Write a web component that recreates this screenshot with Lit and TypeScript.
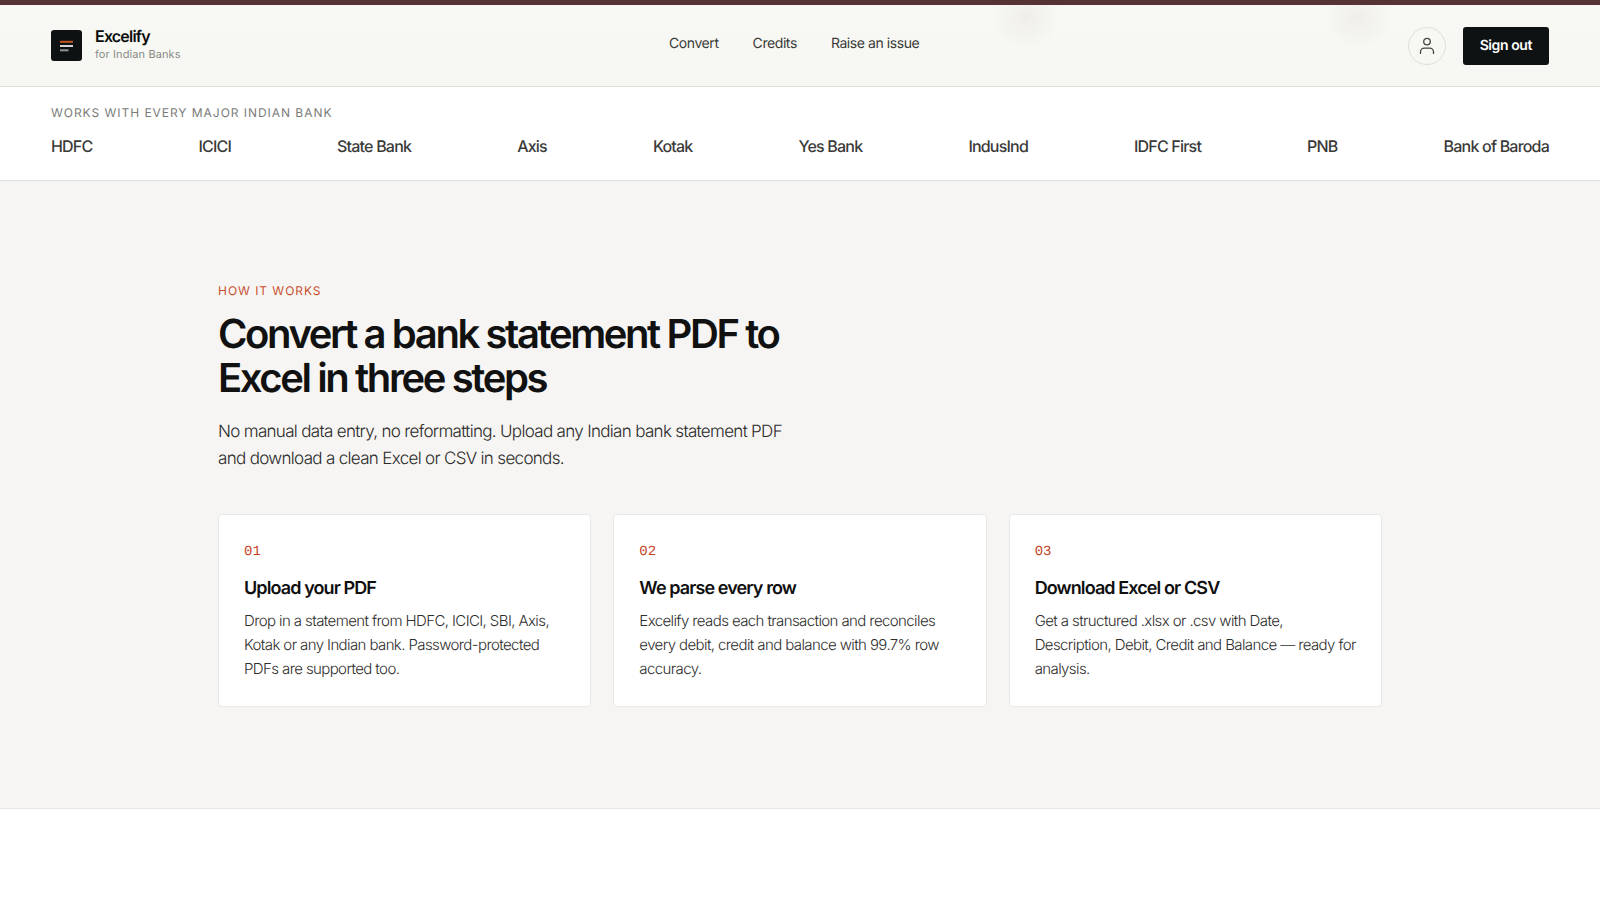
import { LitElement, html, css } from "lit";
import { customElement, property } from "lit/decorators.js";

const BANKS = ["HDFC", "ICICI", "State Bank", "Axis", "Kotak", "Yes Bank", "IndusInd", "IDFC First", "PNB", "Bank of Baroda"];

const STEPS = [
  {
    number: "01",
    heading: "Upload your PDF",
    text: "Drop in a statement from HDFC, ICICI, SBI, Axis, Kotak or any Indian bank. Password-protected PDFs are supported too.",
  },
  {
    number: "02",
    heading: "We parse every row",
    text: "Excelify reads each transaction and reconciles every debit, credit and balance with 99.7% row accuracy.",
  },
  {
    number: "03",
    heading: "Download Excel or CSV",
    text: "Get a structured .xlsx or .csv with Date, Description, Debit, Credit and Balance — ready for analysis.",
  },
];

@customElement("site-header")
export class SiteHeader extends LitElement {
  static styles = css`
    :host {
      display: block;
      border-top: 5px solid #553335;
      border-bottom: 1px solid #deded9;
      background:
        radial-gradient(ellipse 34px 32px at 1026px 12px, rgba(110, 60, 50, 0.06), transparent),
        radial-gradient(ellipse 34px 32px at 1358px 12px, rgba(110, 60, 50, 0.06), transparent),
        linear-gradient(#f8f9f4, #f6f7f2);
    }
    .bar {
      display: flex;
      justify-content: space-between;
      align-items: center;
      box-sizing: border-box;
      min-height: 81px;
      padding: 0 51px;
    }
    .brand {
      display: flex;
      align-items: center;
      gap: 13px;
      color: inherit;
      text-decoration: none;
    }
    .mark {
      display: block;
      width: 31px;
      height: 31px;
    }
    .names {
      display: flex;
      flex-direction: column;
      padding-bottom: 2px;
    }
    .name {
      font-size: 16px;
      line-height: 19px;
      font-weight: 600;
      letter-spacing: -0.05em;
      color: #0b0c0c;
    }
    .tag {
      font-size: 11px;
      line-height: 17px;
      letter-spacing: 0.01em;
      color: #8a8a87;
    }
    .links {
      display: flex;
      gap: 34px;
      padding-bottom: 4px;
    }
    .link {
      font-size: 14px;
      line-height: 20px;
      letter-spacing: -0.03em;
      color: #3a3a38;
      text-decoration: none;
    }
    .account {
      display: flex;
      align-items: center;
      gap: 17px;
    }
    .avatar {
      display: grid;
      place-items: center;
      width: 38px;
      height: 38px;
      padding: 0;
      border: 1px solid #dfe0db;
      border-radius: 50%;
      background: transparent;
      color: #444442;
    }
    .signout {
      height: 38px;
      padding: 0 17px;
      border: 0;
      border-radius: 3px;
      background: #0e1213;
      color: #ffffff;
      font: 600 14px/20px Inter, sans-serif;
      text-rendering: inherit;
      letter-spacing: -0.03em;
    }
  `;

  render() {
    return html`
      <header class="bar">
        <a class="brand" href="#home">
          <svg class="mark" viewBox="0 0 31 31" aria-hidden="true">
            <rect width="31" height="31" rx="3" fill="#0d1112" />
            <rect x="9" y="10.8" width="13" height="2" fill="#c4541f" />
            <rect x="9" y="15" width="13" height="2" fill="#d3d3d8" />
            <rect x="9" y="19.3" width="8.5" height="2" fill="#8f9492" />
          </svg>
          <span class="names">
            <span class="name">Excelify</span>
            <span class="tag">for Indian Banks</span>
          </span>
        </a>
        <nav class="links" aria-label="Main">
          <a class="link" href="#convert">Convert</a>
          <a class="link" href="#credits">Credits</a>
          <a class="link" href="#issue">Raise an issue</a>
        </nav>
        <div class="account">
          <button class="avatar" type="button" aria-label="Account">
            <svg width="18" height="18" viewBox="0 0 18 18" fill="none" stroke="currentColor" stroke-width="1.3" stroke-linecap="round" aria-hidden="true">
              <circle cx="9" cy="4.6" r="3.3" />
              <path d="M2.5 16.4V15a3.8 3.8 0 0 1 3.8-3.8h5.400a3.8 3.8 0 0 1 3.8 3.8v1.4" />
            </svg>
          </button>
          <button class="signout" type="button">Sign out</button>
        </div>
      </header>
    `;
  }
}

@customElement("bank-strip")
export class BankStrip extends LitElement {
  static styles = css`
    :host {
      display: block;
      padding: 17px 51px 21px;
      border-bottom: 1px solid #dfdfde;
      background: #ffffff;
    }
    .label {
      margin: 0 0 12px;
      font-size: 12px;
      line-height: 18px;
      letter-spacing: 0.08em;
      text-transform: uppercase;
      color: #7b7b79;
    }
    .banks {
      display: flex;
      flex-wrap: wrap;
      justify-content: space-between;
      gap: 8px 24px;
      margin: 0;
      padding: 0;
      list-style: none;
    }
    .bank {
      font-size: 16px;
      line-height: 25px;
      font-weight: 500;
      letter-spacing: -0.05em;
      color: #3a3a39;
    }
  `;

  render() {
    return html`
      <p class="label">Works with every major Indian bank</p>
      <ul class="banks">
        ${BANKS.map((bank) => html`<li class="bank">${bank}</li>`)}
      </ul>
    `;
  }
}

@customElement("step-card")
export class StepCard extends LitElement {
  @property() number = "";
  @property() heading = "";
  @property() text = "";

  static styles = css`
    :host {
      display: block;
      padding: 27px 25px 25px;
      border: 1px solid #e8e8e6;
      border-radius: 4px;
      background: #ffffff;
    }
    .number {
      margin: 0 0 14px;
      font: 400 14px/20px "Liberation Mono", monospace;
      color: #c4431f;
    }
    .heading {
      margin: 0 0 7px;
      font-size: 18px;
      line-height: 26px;
      font-weight: 600;
      letter-spacing: -0.05em;
      color: #0f0f0f;
    }
    .text {
      margin: 0;
      font-size: 15px;
      line-height: 24px;
      font-weight: 300;
      letter-spacing: -0.04em;
      color: #2f2f2e;
    }
  `;

  render() {
    return html`
      <p class="number">${this.number}</p>
      <h3 class="heading">${this.heading}</h3>
      <p class="text">${this.text}</p>
    `;
  }
}

@customElement("app-root")
export class AppRoot extends LitElement {
  static styles = css`
    :host {
      display: block;
      min-height: 100vh;
      background: #ffffff;
      font-family: Inter, sans-serif;
      text-rendering: geometricPrecision;
    }
    .how {
      padding: 101px 48px;
      border-bottom: 1px solid #e6e6e4;
      background: #f6f5f3;
    }
    .inner {
      max-width: 1164px;
      margin: 0 auto;
    }
    .eyebrow {
      margin: 0 0 12px;
      font-size: 12px;
      line-height: 18px;
      letter-spacing: 0.08em;
      text-transform: uppercase;
      color: #c8502f;
    }
    .title {
      max-width: 590px;
      margin: 0 0 19px;
      font-size: 40px;
      line-height: 44px;
      font-weight: 600;
      letter-spacing: -0.06em;
      color: #111111;
    }
    .lead {
      max-width: 590px;
      margin: 0 0 41px;
      font-size: 17px;
      line-height: 27px;
      font-weight: 300;
      letter-spacing: -0.04em;
      color: #2a2a29;
    }
    .steps {
      display: grid;
      grid-template-columns: repeat(auto-fit, minmax(300px, 1fr));
      gap: 22px;
    }
  `;

  render() {
    return html`
      <site-header></site-header>
      <main>
        <bank-strip></bank-strip>
        <section class="how">
          <div class="inner">
            <p class="eyebrow">How it works</p>
            <h2 class="title">Convert a bank statement PDF to Excel in three steps</h2>
            <p class="lead">
              No manual data entry, no reformatting. Upload any Indian bank statement PDF and download a clean Excel or CSV in
              seconds.
            </p>
            <div class="steps">
              ${STEPS.map((step) => html`<step-card .number=${step.number} .heading=${step.heading} .text=${step.text}></step-card>`)}
            </div>
          </div>
        </section>
      </main>
    `;
  }
}
